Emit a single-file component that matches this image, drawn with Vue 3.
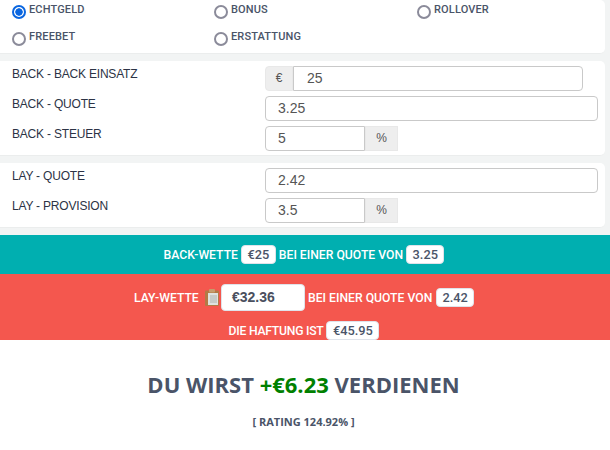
<script setup>
const types = [
  { label: 'ECHTGELD', checked: true },
  { label: 'BONUS', checked: false },
  { label: 'ROLLOVER', checked: false },
  { label: 'FREEBET', checked: false },
  { label: 'ERSTATTUNG', checked: false }
]
</script>

<template>
  <div class="page">
    <section class="panel types">
      <label v-for="t in types" :key="t.label" class="type">
        <input type="radio" name="type" class="radio" :checked="t.checked" />
        <span>{{ t.label }}</span>
      </label>
    </section>

    <section class="panel form form-back">
      <div class="row">
        <span class="lbl">BACK - BACK EINSATZ</span>
        <div class="group g-stake">
          <span class="addon addon-l">€</span>
          <input class="field f-r" value="25" />
        </div>
      </div>
      <div class="row">
        <span class="lbl">BACK - QUOTE</span>
        <div class="group"><input class="field f-full" value="3.25" /></div>
      </div>
      <div class="row">
        <span class="lbl">BACK - STEUER</span>
        <div class="group g-pct">
          <input class="field f-l" value="5" />
          <span class="addon addon-r">%</span>
        </div>
      </div>
    </section>

    <section class="panel form form-lay">
      <div class="row">
        <span class="lbl">LAY - QUOTE</span>
        <div class="group"><input class="field f-full" value="2.42" /></div>
      </div>
      <div class="row">
        <span class="lbl">LAY - PROVISION</span>
        <div class="group g-pct">
          <input class="field f-l" value="3.5" />
          <span class="addon addon-r">%</span>
        </div>
      </div>
    </section>

    <section class="band teal">
      <span>BACK-WETTE</span>
      <b class="pill">€25</b>
      <span>BEI EINER QUOTE VON</span>
      <b class="pill">3.25</b>
    </section>

    <section class="band red">
      <div class="red-line first">
        <span class="w-label">LAY-WETTE</span>
        <svg class="clip" width="14" height="17" viewBox="0 0 14 17" aria-hidden="true">
          <rect x="0" y="1.5" width="14" height="15.5" rx="1" fill="#b27a45" />
          <rect x="3" y="4" width="10" height="12" fill="#dfe2df" />
          <rect x="4" y="0" width="6" height="3.5" rx="1" fill="#c69c6c" />
          <path d="M5 7h7M5 9h7M5 11h7M5 13h7" stroke="#aeb2af" stroke-width="1" />
        </svg>
        <b class="stake">€32.36</b>
        <span class="w-quote">BEI EINER QUOTE VON</span>
        <b class="pill w-pill">2.42</b>
      </div>
      <div class="red-line liability">
        <span class="liability-text">DIE HAFTUNG IST</span>
        <b class="pill">€45.95</b>
      </div>
    </section>

    <section class="result">
      <h1>DU WIRST <span class="gain">+€6.23</span> VERDIENEN</h1>
      <p>[ RATING 124.92% ]</p>
    </section>
  </div>
</template>

<style>
html, body { margin: 0; background: #fff; }
</style>

<style scoped>
.page {
  width: 610px;
  height: 450px;
  overflow: hidden;
  background: #f2f4f4;
  font-family: "Liberation Sans", Arial, sans-serif;
}
.panel {
  width: 605px;
  box-sizing: border-box;
  background: #fff;
  border-bottom: 1px solid #ebeded;
  border-radius: 0 5px 5px 0;
  margin-bottom: 7px;
}
.types {
  height: 54px;
  padding-left: 12px;
  display: grid;
  grid-template-columns: 202px 203px 1fr;
  grid-auto-rows: 27px;
}
.type {
  display: flex;
  align-items: flex-start;
  gap: 3px;
  height: 27px;
  font-family: Roboto, sans-serif;
  font-weight: 500;
  font-size: 11px;
  letter-spacing: 0.15px;
  color: #4a5468;
  line-height: 18px;
}
.type span { padding-top: 1px; }
.radio {
  appearance: none;
  box-sizing: border-box;
  width: 14px;
  height: 14px;
  margin: 5px 0 0;
  border: 2px solid #8b8b9a;
  border-radius: 50%;
  background: #fff;
  flex: none;
}
.radio:checked {
  border-color: #0a66e0;
  background: radial-gradient(circle, #0a66e0 0 3.4px, #fff 4px);
}
.form {
  padding: 5px 7px 4px 12px;
  display: flex;
  flex-direction: column;
  gap: 5px;
}
.row {
  display: grid;
  grid-template-columns: 253px 1fr;
  height: 25px;
}
.lbl {
  padding-top: 1px;
  font-size: 12px;
  letter-spacing: -0.2px;
  line-height: 14px;
  color: #2c3345;
}
.group { display: flex; height: 25px; }
.g-stake { width: 318px; }
.g-pct { width: 133px; }
.field {
  box-sizing: border-box;
  min-width: 0;
  height: 25px;
  padding: 0 12px 1px;
  border: 1px solid #c9c9c9;
  background: #fff;
  font-family: "Liberation Sans", Arial, sans-serif;
  font-size: 14px;
  color: #555;
  outline: none;
}
.f-full { width: 100%; border-radius: 4px; }
.f-l { width: 100px; border-radius: 4px 0 0 4px; }
.f-r { flex: 1; border-radius: 0 4px 4px 0; padding-left: 13px; }
.addon {
  box-sizing: border-box;
  background: #eeeeee;
  border: 1px solid #e8e8e8;
  color: #555;
  font-size: 12px;
  line-height: 23px;
  text-align: center;
}
.addon-l { width: 28px; flex: none; border-radius: 4px 0 0 4px; }
.addon-r { width: 33px; flex: none; }
.band {
  box-sizing: border-box;
  width: 100%;
  padding-right: 2px;
  font-family: Roboto, sans-serif;
  font-weight: 500;
  font-size: 12.2px;
  color: #fff;
}
.teal {
  height: 39px;
  background: #00afb0;
  display: flex;
  justify-content: center;
  align-items: center;
  gap: 3px;
}
.red {
  height: 66px;
  background: #f4574e;
  display: flex;
  flex-direction: column;
}
.red-line {
  display: flex;
  justify-content: center;
  align-items: center;
  gap: 3px;
}
.first { height: 47px; }
.liability { height: 19px; }
.liability-text { letter-spacing: -0.25px; }
.w-label { width: 63px; flex: none; white-space: nowrap; }
.w-quote { width: 125px; flex: none; white-space: nowrap; }
.w-pill { width: 38px; flex: none; padding: 0; text-align: center; }
.pill {
  box-sizing: border-box;
  height: 19px;
  padding: 0 5.5px;
  background: #fff;
  border: 1px solid #dfe3ea;
  border-radius: 4px;
  font-family: Roboto, sans-serif;
  font-weight: 500;
  font-size: 12.8px;
  line-height: 17px;
  color: #4a5468;
}
.clip { flex: none; margin-left: 5px; }
.stake {
  box-sizing: border-box;
  flex: none;
  width: 84px;
  height: 27px;
  margin-left: -1px;
  padding-left: 10px;
  background: #fff;
  border: 1px solid #dfe3ea;
  border-radius: 4px;
  font-family: "Liberation Sans", Arial, sans-serif;
  font-weight: 700;
  font-size: 14px;
  line-height: 25px;
  color: #4a4f5e;
}
.result {
  box-sizing: border-box;
  height: 110px;
  padding-right: 3px;
  background: #fff;
  text-align: center;
  font-family: "Open Sans", sans-serif;
  color: #4a5468;
}
.result h1 {
  margin: 0;
  padding-top: 29px;
  font-size: 22px;
  line-height: 30px;
  font-weight: 700;
}
.gain { color: #008000; }
.result p {
  margin: 15px 0 0;
  font-size: 11px;
  line-height: 15px;
  font-weight: 700;
}
</style>
